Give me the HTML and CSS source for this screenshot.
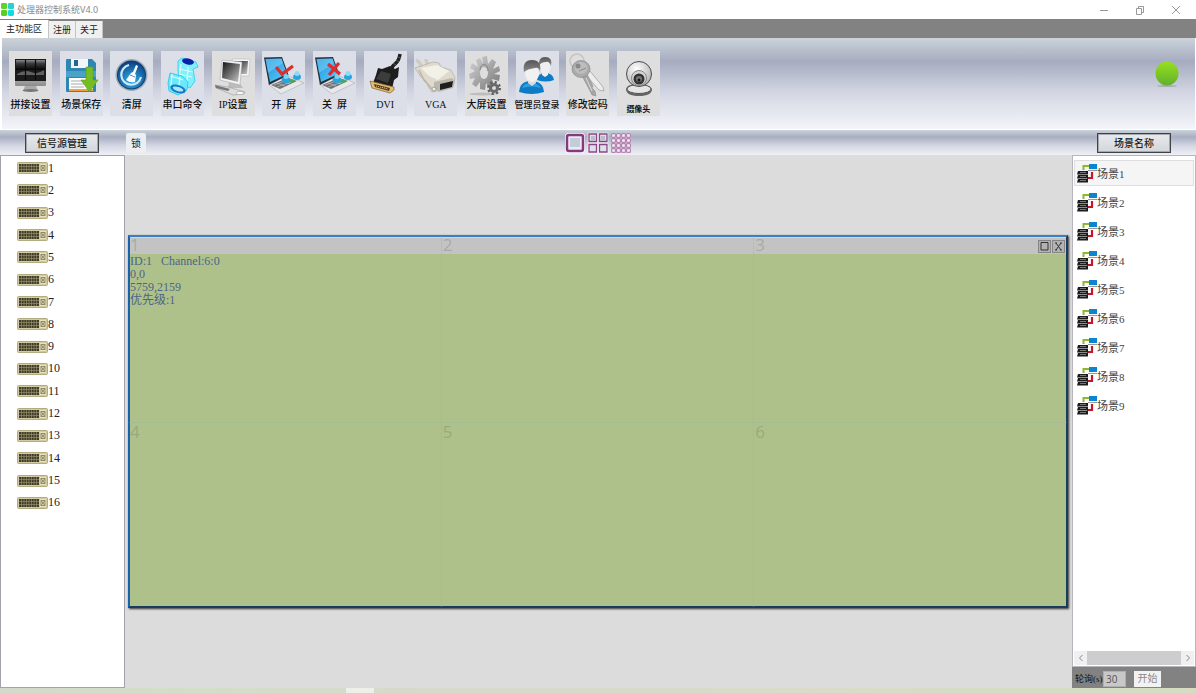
FILE: index.html
```html
<!DOCTYPE html>
<html lang="zh-CN">
<head>
    <meta charset="UTF-8">
    <meta name="viewport" content="width=device-width, initial-scale=1.0">
    <title>处理器控制系统V4.0</title>
    <link rel="stylesheet" href="styles.css">
</head>
<body>
    <!-- Shared icons -->
    <svg class="sprite" aria-hidden="true">
        <defs>
            <linearGradient id="silver" x1="0" y1="0" x2="0" y2="1">
                <stop offset="0" stop-color="#fafafa"/>
                <stop offset="1" stop-color="#8c8c8c"/>
            </linearGradient>
            <linearGradient id="gear" x1="0" y1="0" x2="1" y2="1">
                <stop offset="0" stop-color="#d6d6d6"/>
                <stop offset="1" stop-color="#757575"/>
            </linearGradient>
            <linearGradient id="panel" x1="0" y1="0" x2="0" y2="1">
                <stop offset="0" stop-color="#8a8a8a"/>
                <stop offset="0.4" stop-color="#3a3a3a"/>
                <stop offset="1" stop-color="#0c0c0c"/>
            </linearGradient>
            <linearGradient id="sky" x1="0" y1="0" x2="1" y2="1">
                <stop offset="0" stop-color="#1b8fdc"/>
                <stop offset="1" stop-color="#5fd0fb"/>
            </linearGradient>
            <linearGradient id="glass" x1="0" y1="0" x2="1" y2="1">
                <stop offset="0" stop-color="#111"/>
                <stop offset="1" stop-color="#c9c9c9"/>
            </linearGradient>
            <linearGradient id="hair" x1="0" y1="0" x2="0" y2="1">
                <stop offset="0" stop-color="#555"/>
                <stop offset="1" stop-color="#8a8a8a"/>
            </linearGradient>
            <linearGradient id="lime" x1="0" y1="0" x2="0" y2="1">
                <stop offset="0" stop-color="#96e01c"/>
                <stop offset="1" stop-color="#62b030"/>
            </linearGradient>
            <radialGradient id="orb" cx="0.5" cy="0.7" r="0.7">
                <stop offset="0" stop-color="#35b4ee"/>
                <stop offset="1" stop-color="#0a3f80"/>
            </radialGradient>
            <radialGradient id="ball" cx="0.4" cy="0.3" r="0.7">
                <stop offset="0" stop-color="#fff"/>
                <stop offset="1" stop-color="#b5b5b5"/>
            </radialGradient>
        </defs>
        <symbol id="board" viewBox="0 0 31 12">
            <rect x="0.5" y="0.5" width="30" height="11" rx="1" fill="#d2cba1" stroke="#b3ac7e"/>
            <rect x="2" y="2" width="20" height="8" fill="#3f3d2a"/>
            <path d="M2 4.500h20M2 7.500h20M4.500 2v8M7 2v8M9.500 2v8M12 2v8M14.500 2v8M17 2v8M19.500 2v8" stroke="#a09a72" stroke-width="0.6"/>
            <rect x="23" y="2" width="6" height="8" fill="#e6e1c0"/>
            <path d="M24 3.500h4v5h-4zM24 3.500l4 5M28 3.500l-4 5" fill="none" stroke="#88825c" stroke-width="0.9"/>
        </symbol>
        <symbol id="scene" viewBox="0 0 20 20">
            <path d="M6.500 7V3H13" fill="none" stroke="#8db92e" stroke-width="2"/>
            <rect x="12" y="1" width="8" height="5" fill="#0c84d0"/>
            <path d="M11 7.500h9" stroke="#999"/>
            <path d="M15 9v6h-5" fill="none" stroke="#c3182c" stroke-width="2.200"/>
            <path d="M1 8h10v3.500H0zM1 12h10v3.500H0zM1 16h10v3.500H0z" fill="#1c1c1c"/>
            <path d="M3 9.500h6M3 13.500h6M3 17.500h6" stroke="#8f8f8f" stroke-width="0.8"/>
        </symbol>
        <symbol id="laptop" viewBox="0 0 43 46">
            <path d="M6 33L26 25 42 32 19 43z" fill="#e8e8ea" stroke="#b5b5b5" stroke-width="0.7"/>
            <path d="M9 34l17-7 9 3-17 8z" fill="#6f7276"/>
            <path d="M12 34l17-6M15 36l17-6M20 30l8 3M15 32l8 3" stroke="#c9c9c9" stroke-width="0.6"/>
            <path d="M2 6.500L20 6l6.500 18L7 34z" fill="#263038"/>
            <path d="M3.500 8L19.500 7.500 25 23 8 31z" fill="url(#sky)"/>
            <path d="M3.500 8L19.500 7.500 21 12 6 22z" fill="#8bdcfb" opacity="0.45"/>
            <ellipse cx="24" cy="29" rx="4.500" ry="3" fill="#28a5dd"/>
            <circle cx="24" cy="25.500" r="2.500" fill="#7bd2f3"/>
            <ellipse cx="35" cy="26" rx="4" ry="3" fill="#28a5dd"/>
            <circle cx="35" cy="22.500" r="2.500" fill="#8edaf5"/>
            <ellipse cx="30" cy="30" rx="2.500" ry="1.800" fill="#35b45f"/>
        </symbol>
    </svg>

    <div class="app">
        <header class="title-bar">
            <svg class="logo" viewBox="0 0 14 14">
                <rect x="0" y="0" width="6.500" height="6.500" rx="1.500" fill="#5fd32a"/>
                <rect x="7.500" y="0" width="6.500" height="6.500" rx="1.500" fill="#22d3cf"/>
                <rect x="0" y="7.500" width="6.500" height="6.500" rx="1.500" fill="#58cf22"/>
                <rect x="7.500" y="7.500" width="6.500" height="6.500" rx="1.500" fill="#12dbe6"/>
            </svg>
            <h1>处理器控制系统V4.0</h1>
            <div class="window-controls">
                <button type="button" aria-label="最小化"><svg viewBox="0 0 10 10"><path d="M1 5.500h8"/></svg></button>
                <button type="button" aria-label="还原"><svg viewBox="0 0 10 10"><path d="M1.500 3.500h5v6h-5zM3.500 3.500v-2h5v6h-2"/></svg></button>
                <button type="button" aria-label="关闭"><svg viewBox="0 0 10 10"><path d="M1 1l8 8M9 1l-8 8"/></svg></button>
            </div>
        </header>

        <nav class="tabs">
            <button type="button" class="tab active">主功能区</button>
            <button type="button" class="tab">注册</button>
            <button type="button" class="tab">关于</button>
        </nav>

        <div class="toolbar">
            <div class="tools">
                <button type="button" class="tool gray">
                    <svg viewBox="0 0 43 46">
                        <path d="M16 35h11l2 5H14z" fill="#aaa"/>
                        <ellipse cx="21.500" cy="39.500" rx="8" ry="1.500" fill="#777"/>
                        <rect x="6" y="8" width="31" height="27" rx="1" fill="url(#silver)"/>
                        <rect x="6" y="8" width="31" height="22" fill="#1c1c1c"/>
                        <path d="M7 9h29v9H7z" fill="url(#panel)"/>
                        <path d="M8 23q8-5 14-2t13-2v5H8z" fill="#606060"/>
                        <path d="M16.500 9v20M26.500 9v20M7 18.500h29" stroke="#080808" stroke-width="1.200"/>
                    </svg>
                    <span>拼接设置</span>
                </button>
                <button type="button" class="tool">
                    <svg viewBox="0 0 43 46">
                        <path d="M7 8h25l4 4v28a1 1 0 0 1-1 1H7a1 1 0 0 1-1-1V9a1 1 0 0 1 1-1z" fill="#2f86b0"/>
                        <path d="M6 20h30v6H6z" fill="#4ba2c8"/>
                        <path d="M11 8h17v9H11z" fill="#f3f6f8"/>
                        <path d="M14 9h4v6h-4z" fill="#24688a"/>
                        <path d="M9 27h24v12H9z" fill="#fff"/>
                        <path d="M11 30h13M11 33h13M11 36h13" stroke="#a4aaaf"/>
                        <path d="M9 38h24v2H9z" fill="#f0a23c"/>
                        <path d="M26 16h7v13h5l-8.500 12L21 29h5z" fill="#74bd25" stroke="#5b9e1c" stroke-width="0.600"/>
                    </svg>
                    <span>场景保存</span>
                </button>
                <button type="button" class="tool">
                    <svg viewBox="0 0 43 46">
                        <circle cx="21.500" cy="24" r="16" fill="#9fabb8"/>
                        <circle cx="21.500" cy="24" r="14.500" fill="#123d6e"/>
                        <circle cx="21.500" cy="24" r="13.500" fill="url(#orb)"/>
                        <path d="M19 14a10 10 0 1 0 12 12" fill="none" stroke="#cceafc" stroke-width="2.200"/>
                        <path d="M26 14l2 1-3 8 1 1-1 7q-5 1-9-2l5-7 2-1z" fill="#fff"/>
                        <path d="M20 24l5 2" stroke="#3b95cc"/>
                    </svg>
                    <span>清屏</span>
                </button>
                <button type="button" class="tool">
                    <svg viewBox="0 0 43 46">
                        <path d="M17 10l4-3 14 4 2 5-5 2 2 12-5 7-9-4-3-12z" fill="#7ff0fc" stroke="#27cdea" stroke-width="0.800"/>
                        <path d="M18 18l14 3M18 23l13 3M20 13l-2 16M27 16l-1 16" stroke="#dffdff" stroke-width="1.200"/>
                        <ellipse cx="27" cy="10.500" rx="6" ry="3" fill="#0a23a8" transform="rotate(12 27 10.500)"/>
                        <path d="M9 22l12 3 6 6-1 8-9 5-9-4-1-8z" fill="#6be9fa" stroke="#20c5e6" stroke-width="0.800"/>
                        <path d="M10 25l12 4M11 23l-1 12M19 26l-1 9" stroke="#dffdff" stroke-width="1.200"/>
                        <ellipse cx="17" cy="38" rx="8" ry="4" fill="#1878cc" transform="rotate(18 17 38)"/>
                        <ellipse cx="17" cy="38" rx="5.500" ry="2" fill="#a4ecfb" transform="rotate(18 17 38)"/>
                    </svg>
                    <span>串口命令</span>
                </button>
                <button type="button" class="tool gray">
                    <svg viewBox="0 0 43 46">
                        <path d="M20 8h18l-1 17H24z" fill="#f4f4f4" stroke="#bbb" stroke-width="0.600"/>
                        <path d="M22 10h14l-1 13H24z" fill="url(#glass)"/>
                        <path d="M17 31h10l4 6H16z" fill="#bbb"/>
                        <path d="M10 9l20 2-2 23-20-5z" fill="#f2f2f2" stroke="#aaa" stroke-width="0.600"/>
                        <path d="M11 11l17 2-2 18-16-4z" fill="url(#glass)"/>
                        <path d="M3 34l13 2 17 5-1 2-11 1L4 37z" fill="#ddd" stroke="#999" stroke-width="0.600"/>
                        <path d="M3 34l15 4-2 2-12-3z" fill="#777"/>
                        <ellipse cx="28" cy="42" rx="4" ry="1.500" fill="#fff" stroke="#999" stroke-width="0.600"/>
                    </svg>
                    <span>IP设置</span>
                </button>
                <button type="button" class="tool">
                    <svg viewBox="0 0 43 46">
                        <use href="#laptop"/>
                        <path d="M14 16l6 7L31 15" fill="none" stroke="#e02a2e" stroke-width="3.200"/>
                    </svg>
                    <span>开&nbsp; 屏</span>
                </button>
                <button type="button" class="tool">
                    <svg viewBox="0 0 43 46">
                        <use href="#laptop"/>
                        <path d="M15 13l12 10M26 12L16 24" fill="none" stroke="#e02a2e" stroke-width="3.200"/>
                    </svg>
                    <span>关&nbsp; 屏</span>
                </button>
                <button type="button" class="tool">
                    <svg viewBox="0 0 43 46">
                        <path d="M36 3q-1 7-5 10t-3 6" fill="none" stroke="#202020" stroke-width="3.500"/>
                        <path d="M34 6l3 1M32 9l3 2M29 12l3 2" stroke="#777" stroke-width="0.600"/>
                        <path d="M14 17l4 1 8-3 5 3 4-2-1 10-4 3-2 9-19-6 3-8z" fill="#1d1d1d"/>
                        <path d="M17 20l10 3-3 9-12-4z" fill="#3c3c3c"/>
                        <path d="M6 30l24 6v3l-4 3-18-5z" fill="#e1bd70" stroke="#80612a" stroke-width="0.700"/>
                        <path d="M10 33l16 4-1 3-14-4z" fill="#4e371b"/>
                        <path d="M12 35l12 3" stroke="#e9ce94" stroke-width="1.200" stroke-dasharray="1 1"/>
                    </svg>
                    <span>DVI</span>
                </button>
                <button type="button" class="tool">
                    <svg viewBox="0 0 43 46">
                        <path d="M2 9q5 2 6 10M12 8q0 5 5 8" fill="none" stroke="#d1cbbd" stroke-width="3.500"/>
                        <path d="M1 17l6-2 12-4 6 1 2 4 10 3 4 8-2 8-12 4-9 2-3-4-3-7-5-4z" fill="#dedacd" stroke="#b3ac9c" stroke-width="0.700"/>
                        <path d="M7 17l16-3 12 6-11 9-9-4z" fill="#f3f0e7"/>
                        <path d="M5 19l5 10 8 9" fill="none" stroke="#bbb5a5" stroke-width="1.500"/>
                        <path d="M20 31l18-4 3 3-2 7-14 4-5-4z" fill="#bdb8ad"/>
                        <path d="M26 33l13-3-1 6-12 3z" fill="#1e1e1e"/>
                        <circle cx="20" cy="38" r="2" fill="#eee" stroke="#777" stroke-width="0.600"/>
                    </svg>
                    <span>VGA</span>
                </button>
                <button type="button" class="tool gray">
                    <svg viewBox="0 0 43 46">
                        <ellipse cx="18" cy="43" rx="14" ry="1.500" fill="#bdbdbd"/>
                        <g fill="url(#gear)">
                            <path d="M17 6l5-1 1 8 4-5 4 3-3 7 6-3 1 5-6 3 6 1-1 6-7-2 2 7-4 3-4-6-1 7-5-1 0-7-4 5-4-3 3-6-5 1-1-5 6-3-5-3 2-5 6 4-2-7 4-2 3 6z"/>
                        </g>
                        <ellipse cx="19" cy="22" rx="4" ry="6" fill="#dedede"/>
                        <path d="M15 19a4 6 0 0 1 8 1" fill="none" stroke="#858585"/>
                        <circle cx="29" cy="37" r="5.500" fill="none" stroke="#5e5e5e" stroke-width="3" stroke-dasharray="2 2.320"/>
                        <circle cx="29" cy="37" r="3.500" fill="none" stroke="#6b6b6b" stroke-width="3"/>
                    </svg>
                    <span>大屏设置</span>
                </button>
                <button type="button" class="tool">
                    <svg viewBox="0 0 43 46">
                        <path d="M21 29q1-7 8-7 8 0 9 7-8 3-17 0z" fill="#0d7cc4"/>
                        <path d="M26 20h6v4l-3 2-3-2z" fill="#eee"/>
                        <ellipse cx="29" cy="16" rx="5.500" ry="7" fill="#eee"/>
                        <path d="M23 15q-1-9 6-9 8 0 6 9-2-5-5-4-5 0-7 4z" fill="url(#hair)"/>
                        <path d="M3 41q1-11 12-11 12 0 13 11-12 4-25 0z" fill="#0d7cc4"/>
                        <path d="M6 37q2-5 9-5t10 5q-9-3-19 0z" fill="#2d9fe3"/>
                        <path d="M12 28h8v4l-4 3-4-3z" fill="#ddd"/>
                        <ellipse cx="16" cy="22" rx="7" ry="9" fill="#f1f1f1"/>
                        <path d="M8 21q-2-12 8-12 10 0 8 12-1-5-5-4-8 1-11 4z" fill="url(#hair)"/>
                    </svg>
                    <span class="long">管理员登录</span>
                </button>
                <button type="button" class="tool gray">
                    <svg viewBox="0 0 43 46">
                        <path d="M19 23l5-3 13 16 1 4-5-1z" fill="#ededed" stroke="#b0b0b0"/>
                        <circle cx="11" cy="10" r="7" fill="none" stroke="#c4c4c4" stroke-width="1.500"/>
                        <path d="M16 25l5-2 6 12-1 2 3 3 1 5-4-1-4-8z" fill="#a5a5a5" stroke="#888" stroke-width="0.500"/>
                        <ellipse cx="15" cy="18" rx="9" ry="8.500" fill="#aaa" stroke="#8d8d8d" stroke-width="0.700"/>
                        <ellipse cx="15" cy="17" rx="6.500" ry="6" fill="#bdbdbd"/>
                        <circle cx="12" cy="15" r="2.500" fill="#888"/>
                        <path d="M13 20l7-3" stroke="#8b8b8b"/>
                        <path d="M20 27l6 13" stroke="#ddd"/>
                    </svg>
                    <span>修改密码</span>
                </button>
                <button type="button" class="tool gray camera">
                    <svg viewBox="0 0 43 46">
                        <path d="M9 38q1-5 12-5t14 5q0 7-13 7T9 38z" fill="#666"/>
                        <ellipse cx="22" cy="38" rx="12" ry="4.500" fill="#e5e5e5" stroke="#555"/>
                        <circle cx="22" cy="23" r="12.500" fill="url(#ball)" stroke="#4c4c4c"/>
                        <circle cx="22" cy="27" r="7.500" fill="#d4d4d4" stroke="#888"/>
                        <circle cx="22" cy="28" r="5.500" fill="#333"/>
                        <circle cx="22" cy="28" r="3" fill="#777"/>
                        <circle cx="22" cy="29" r="1.500" fill="#111"/>
                    </svg>
                    <span>摄像头</span>
                </button>
            </div>
            <svg class="status" viewBox="0 0 24 26" role="img" aria-label="已连接">
                <ellipse cx="12" cy="25" rx="10" ry="1" fill="#a9adb5"/>
                <ellipse cx="12" cy="12.500" rx="11.500" ry="12" fill="url(#lime)"/>
            </svg>
        </div>

        <div class="sub-bar">
            <div class="sub-left">
                <button type="button" class="panel-button">信号源管理</button>
                <button type="button" class="lock">锁</button>
            </div>
            <div class="layouts">
                <button type="button" aria-label="单画面">
                    <svg viewBox="0 0 20 20">
                        <rect x="2" y="2" width="16" height="16" rx="2" fill="#e8ebf1" stroke="#fff" stroke-width="4"/>
                        <rect x="2" y="2" width="16" height="16" rx="2" fill="#e8ebf1" stroke="#853a80" stroke-width="2.500"/>
                        <path d="M5 5h10v9H5z" fill="#c5ccd8"/>
                    </svg>
                </button>
                <button type="button" aria-label="四画面">
                    <svg viewBox="0 0 20 20">
                        <path d="M1 1h7.500v7.500H1zM11.500 1H19v7.500h-7.500zM1 11.500h7.500V19H1zM11.500 11.500H19V19h-7.500z" fill="#c8cedb" stroke="#fff" stroke-width="2.500"/>
                        <path d="M1 1h7.500v7.500H1zM11.500 1H19v7.500h-7.500zM1 11.500h7.500V19H1zM11.500 11.500H19V19h-7.500z" fill="#dde1ea" stroke="#8c4687" stroke-width="1.300"/>
                        <path d="M3 3h4v4H3zM13 3h4v4h-4z" fill="#b6bfcc"/>
                    </svg>
                </button>
                <button type="button" aria-label="十六画面">
                    <svg viewBox="0 0 20 20">
                        <defs>
                            <pattern id="cells" width="5" height="5" patternUnits="userSpaceOnUse">
                                <rect width="5" height="5" fill="#fff"/>
                                <rect x="0.700" y="0.700" width="3.600" height="3.600" fill="#f2edf4" stroke="#a0609b" stroke-width="0.900"/>
                            </pattern>
                        </defs>
                        <rect width="20" height="20" fill="url(#cells)"/>
                    </svg>
                </button>
            </div>
            <div class="sub-right">
                <button type="button" class="panel-button">场景名称</button>
            </div>
        </div>

        <main class="workspace">
            <aside class="sources">
                <ul class="source-list">
                    <li><svg><use href="#board"/></svg>1</li>
                    <li><svg><use href="#board"/></svg>2</li>
                    <li><svg><use href="#board"/></svg>3</li>
                    <li><svg><use href="#board"/></svg>4</li>
                    <li><svg><use href="#board"/></svg>5</li>
                    <li><svg><use href="#board"/></svg>6</li>
                    <li><svg><use href="#board"/></svg>7</li>
                    <li><svg><use href="#board"/></svg>8</li>
                    <li><svg><use href="#board"/></svg>9</li>
                    <li><svg><use href="#board"/></svg>10</li>
                    <li><svg><use href="#board"/></svg>11</li>
                    <li><svg><use href="#board"/></svg>12</li>
                    <li><svg><use href="#board"/></svg>13</li>
                    <li><svg><use href="#board"/></svg>14</li>
                    <li><svg><use href="#board"/></svg>15</li>
                    <li><svg><use href="#board"/></svg>16</li>
                </ul>
            </aside>

            <section class="stage">
                <div class="wall">
                    <div class="signal">
                        <div class="signal-header">
                            <button type="button" aria-label="最大化"><svg viewBox="0 0 11 11"><path d="M2 1.500h7v7.500H2z"/></svg></button>
                            <button type="button" aria-label="关闭窗口"><svg viewBox="0 0 11 11"><path d="M3 2l5 7M8 2L3 9M2 2h2M7 2h2M2 9h2M7 9h2"/></svg></button>
                        </div>
                        <div class="signal-info">
                            <p>ID:1&nbsp;&nbsp; Channel:6:0</p>
                            <p>0,0</p>
                            <p>5759,2159</p>
                            <p>优先级:1</p>
                        </div>
                    </div>
                    <div class="screens">
                        <div>1</div>
                        <div>2</div>
                        <div>3</div>
                        <div>4</div>
                        <div>5</div>
                        <div>6</div>
                    </div>
                </div>
            </section>

            <aside class="scenes">
                <div class="scene-panel">
                    <ul class="scene-list">
                        <li class="selected"><svg><use href="#scene"/></svg>场景1</li>
                        <li><svg><use href="#scene"/></svg>场景2</li>
                        <li><svg><use href="#scene"/></svg>场景3</li>
                        <li><svg><use href="#scene"/></svg>场景4</li>
                        <li><svg><use href="#scene"/></svg>场景5</li>
                        <li><svg><use href="#scene"/></svg>场景6</li>
                        <li><svg><use href="#scene"/></svg>场景7</li>
                        <li><svg><use href="#scene"/></svg>场景8</li>
                        <li><svg><use href="#scene"/></svg>场景9</li>
                    </ul>
                    <div class="scrollbar">
                        <button type="button" aria-label="向左"><svg viewBox="0 0 8 8"><path d="M5.500 1L2.500 4l3 3"/></svg></button>
                        <div class="thumb"></div>
                        <button type="button" aria-label="向右"><svg viewBox="0 0 8 8"><path d="M2.500 1l3 3-3 3"/></svg></button>
                    </div>
                </div>
                <form class="polling">
                    <label for="interval">轮询(s)</label>
                    <input type="text" id="interval" value="30">
                    <button type="button">开始</button>
                </form>
            </aside>
        </main>

        <footer class="desktop-edge"><div class="edge-item"></div></footer>
    </div>
</body>
</html>
```

FILE: styles.css
```css
* {
    margin: 0;
    padding: 0;
    box-sizing: border-box;
}

body {
    font-family: 'Liberation Serif', 'Noto Sans CJK SC', serif;
    font-size: 12px;
    color: #222;
    background-color: #dcdcdc;
}

button,
input {
    font-family: inherit;
    color: inherit;
    border: none;
    background: none;
}

svg {
    display: block;
}

ul {
    list-style: none;
}

.sprite {
    position: absolute;
    width: 0;
    height: 0;
}

.app {
    display: flex;
    flex-direction: column;
    min-height: 100vh;
}

/* Title bar */
.title-bar {
    display: flex;
    align-items: center;
    height: 19px;
    background: white;
    padding-left: 1px;
}

.logo {
    width: 13px;
    height: 13px;
    margin-right: 3px;
}

.title-bar h1 {
    font-family: 'Noto Sans', 'Noto Sans CJK SC', sans-serif;
    font-size: 9px;
    font-weight: 400;
    color: #8a8a8a;
}

.window-controls {
    display: flex;
    margin-left: auto;
    padding-right: 2px;
}

.window-controls button {
    display: flex;
    justify-content: center;
    align-items: center;
    width: 36px;
    height: 19px;
}

.window-controls svg {
    width: 10px;
    height: 10px;
    fill: none;
    stroke: #999;
}

/* Tabs */
.tabs {
    display: flex;
    height: 19px;
    background: #828282;
}

.tab {
    font-family: 'Noto Sans CJK SC', sans-serif;
    font-size: 9px;
    line-height: 16px;
    padding: 0 4px;
    margin-top: 2px;
    background: #f0f0f0;
    border-right: 1px solid #c4c4c4;
}

.tab.active {
    background: white;
    padding: 0 6px;
    margin-top: 1px;
}

/* Toolbar */
.toolbar {
    display: flex;
    justify-content: space-between;
    align-items: flex-start;
    height: 92px;
    padding: 13px 16px 0 7px;
    border: solid white;
    border-width: 0 1px 1px 2px;
    background: linear-gradient(#cbd3d9 0%, #a6acc0 26%, #d3d6e2 60%, #f4f5fa 100%);
}

.tools {
    display: flex;
    justify-content: space-between;
    width: 651px;
}

.tool {
    display: flex;
    flex-direction: column;
    align-items: center;
    width: 43px;
    height: 65px;
    background: #dcdfe8;
}

.tool.gray {
    background: #dedede;
}

.tool svg {
    flex-shrink: 0;
    width: 43px;
    height: 46px;
}

.tool span {
    font-size: 10px;
    line-height: 16px;
    font-weight: 500;
    white-space: nowrap;
    color: #111;
}

.tool .long {
    font-size: 9px;
}

.tool.camera span {
    font-size: 8px;
    line-height: 26px;
    font-weight: 700;
}

.status {
    width: 24px;
    height: 26px;
    margin-top: 10px;
}

/* Sub bar */
.sub-bar {
    display: grid;
    grid-template-columns: 1fr auto 1fr;
    align-items: center;
    height: 25px;
    padding: 0 25px;
    background: linear-gradient(#cbd3d9 0%, #a8aec1 28%, #d3d6e2 62%, #eff0f5 100%);
}

.sub-left {
    display: flex;
    align-items: center;
    gap: 27px;
}

.sub-right {
    display: flex;
    justify-content: flex-end;
}

.panel-button {
    width: 74px;
    height: 20px;
    font-size: 10px;
    font-weight: 500;
    border: 1px solid #3f4347;
    box-shadow: inset 0 0 0 1px #a4a8ad;
    background: linear-gradient(#e8eaed, #d3d6da);
}

.lock {
    width: 20px;
    height: 20px;
    font-size: 10px;
    border-radius: 2px;
    background: #eceef1;
}

.layouts {
    display: flex;
    gap: 3px;
}

.layouts svg {
    width: 20px;
    height: 20px;
    overflow: visible;
}

/* Workspace */
.workspace {
    flex: 1;
    display: grid;
    grid-template-columns: 125px 1fr 124px;
}

.sources {
    background: white;
    border: 1px solid #a0a2ac;
}

.source-list {
    display: grid;
    grid-auto-rows: 1fr;
    height: 357px;
    margin-top: 1px;
}

.source-list li {
    display: flex;
    align-items: center;
    padding-left: 16px;
}

.source-list svg {
    width: 31px;
    height: 12px;
}

/* Video wall */
.stage {
    display: flex;
    align-items: center;
    padding: 0 4px 0 3px;
    background: #dcdcdc;
}

.wall {
    position: relative;
    width: 100%;
    aspect-ratio: 940 / 373;
}

.signal {
    height: 100%;
    border: 2px solid #1662ab;
    border-top-color: #3a7fc6;
    border-right-color: #183c60;
    border-bottom-color: #183c60;
    background: #afc18b;
    box-shadow: 1px 1px 2px #333;
}

.signal-header {
    display: flex;
    justify-content: flex-end;
    align-items: center;
    gap: 1px;
    height: 17px;
    padding-right: 1px;
    background: #c3c3c3;
    border-top: 1px solid #d6d6d6;
}

.signal-header button {
    width: 13px;
    height: 13px;
    border: 1px solid #858585;
    background: #b2b2b2;
}

.signal-header svg {
    width: 11px;
    height: 11px;
    fill: none;
    stroke: #333;
}

.signal-info {
    padding-top: 1px;
    line-height: 13px;
    color: #4c6488;
}

.screens {
    position: absolute;
    inset: 1px;
    display: grid;
    grid-template: 1fr 1fr / 1fr 1fr 1fr;
    pointer-events: none;
}

.screens div {
    font-family: 'Open Sans', sans-serif;
    font-size: 17px;
    line-height: 18px;
    padding-left: 1px;
    color: rgba(100, 110, 90, 0.3);
    border-right: 1px solid rgba(140, 185, 170, 0.35);
}

.screens div:nth-child(3n) {
    border-right: none;
}

.screens div:nth-child(n + 4) {
    border-top: 1px solid rgba(140, 185, 170, 0.35);
}

/* Scenes */
.scenes {
    display: flex;
    flex-direction: column;
}

.scene-panel {
    flex: 1;
    display: flex;
    flex-direction: column;
    background: white;
    border: 1px solid #b5b5bb;
    padding: 4px 1px 1px;
}

.scene-list {
    flex: 1;
}

.scene-list li {
    display: flex;
    align-items: center;
    height: 26px;
    margin-bottom: 3px;
    padding-left: 2px;
    border: 1px solid transparent;
    font-size: 11px;
    color: #444;
}

.scene-list .selected {
    background: #f5f5f5;
    border-color: #dedede;
}

.scene-list svg {
    width: 20px;
    height: 20px;
}

.scrollbar {
    display: flex;
    height: 14px;
    background: #f0f0f0;
}

.scrollbar button {
    display: flex;
    justify-content: center;
    align-items: center;
    width: 13px;
}

.scrollbar svg {
    width: 8px;
    height: 8px;
    fill: none;
    stroke: #888;
}

.thumb {
    flex: 1;
    background: #cdcdcd;
}

.polling {
    display: flex;
    align-items: center;
    height: 21px;
    padding: 2px 3px 0;
    background: #828282;
}

.polling label {
    width: 28px;
    font-size: 9px;
    white-space: nowrap;
    color: #111;
}

.polling input {
    width: 23px;
    height: 16px;
    padding-left: 2px;
    font-family: 'Open Sans', sans-serif;
    font-size: 10px;
    color: #555;
    background: #c8c8c8;
    border: 1px solid #b0b0b0;
}

.polling button {
    width: 27px;
    height: 16px;
    margin-left: 8px;
    font-size: 10px;
    line-height: 16px;
    color: #888;
    background: #f2f2f2;
}

/* Strip below the window */
.desktop-edge {
    height: 5px;
    padding-left: 346px;
    background: linear-gradient(90deg, #d5d9cb, #d2dfc8 15%, #d7d9cb 35%, #d9dcc8 70%, #d5dcc2);
}

.edge-item {
    width: 28px;
    height: 5px;
    background: #eeefe9;
}
```
